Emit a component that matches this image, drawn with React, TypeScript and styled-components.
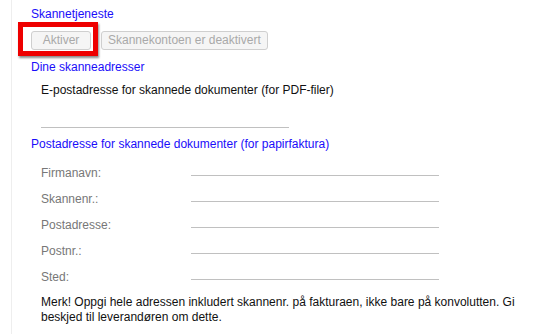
import React from 'react'
import styled, { createGlobalStyle } from 'styled-components'

const GlobalStyle = createGlobalStyle`
  html, body {
    margin: 0;
    padding: 0;
    background: #fff;
    font-family: Arial, "Liberation Sans", sans-serif;
    font-size: 12px;
  }
`

const Page = styled.div`
  margin-left: 11px;
  border-left: 1px solid #eeeeee;
  padding: 7px 0 16px 19px;
  min-height: 311px;
`

const SectionTitle = styled.div`
  color: #1a0dfa;
  line-height: 14px;
`

const ButtonRow = styled.div`
  position: relative;
  display: flex;
  gap: 10px;
  margin: 10px 0 10px;
`

const Button = styled.button`
  font-family: Arial, "Liberation Sans", sans-serif;
  font-size: 12px;
  height: 19px;
  min-width: 60px;
  padding: 0 6px;
  background: #f5f5f5;
  color: #a9a9a9;
  border: 1px solid #cfcfcf;
  border-radius: 3px;
  line-height: 17px;
`

const Highlight = styled.div`
  position: absolute;
  left: -13px;
  top: -9px;
  width: 80px;
  height: 34px;
  box-sizing: border-box;
  border: 5px solid #ee0000;
  box-shadow: 1px 2px 2px rgba(0, 0, 0, 0.45);
  pointer-events: none;
`

const Indent = styled.div`
  padding-left: 10px;
`

const Text = styled.div<{ $top?: number }>`
  color: #111;
  line-height: 14px;
  margin-top: ${(p) => p.$top ?? 0}px;
`

const EmailLine = styled.div`
  width: 248px;
  border-bottom: 1px solid #c0c0c0;
  margin: 30px 0 9px;
`

const Form = styled.div`
  display: grid;
  grid-template-columns: 150px 248px;
  grid-auto-rows: 26px;
  margin-top: 14px;
`

const Label = styled.div`
  color: #777;
  line-height: 14px;
  padding-top: 1px;
`

const Field = styled.div`
  border-bottom: 1px solid #c0c0c0;
  height: 10px;
`

const Note = styled.div`
  color: #111;
  line-height: 15px;
  width: 480px;
`

const fields = ['Firmanavn:', 'Skannenr.:', 'Postadresse:', 'Postnr.:', 'Sted:']

export default function App() {
  return (
    <>
      <GlobalStyle />
      <Page>
        <SectionTitle>Skannetjeneste</SectionTitle>
        <ButtonRow>
          <Button disabled>Aktiver</Button>
          <Button disabled>Skannekontoen er deaktivert</Button>
          <Highlight />
        </ButtonRow>
        <SectionTitle>Dine skanneadresser</SectionTitle>
        <Indent>
          <Text $top={9}>E-postadresse for skannede dokumenter (for PDF-filer)</Text>
          <EmailLine />
        </Indent>
        <SectionTitle>Postadresse for skannede dokumenter (for papirfaktura)</SectionTitle>
        <Indent>
          <Form>
            {fields.map((f) => (
              <React.Fragment key={f}>
                <Label>{f}</Label>
                <Field />
              </React.Fragment>
            ))}
          </Form>
          <Note>
            Merk! Oppgi hele adressen inkludert skannenr. på fakturaen, ikke bare på konvolutten. Gi beskjed til
            leverandøren om dette.
          </Note>
        </Indent>
      </Page>
    </>
  )
}
